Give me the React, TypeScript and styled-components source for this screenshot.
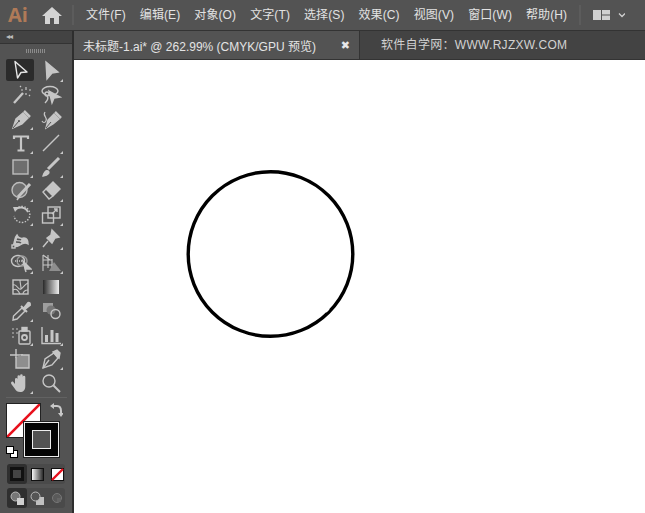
import React from "react";
import styled, { createGlobalStyle } from "styled-components";

const Global = createGlobalStyle`
  html, body { margin: 0; padding: 0; background: #535353; overflow: hidden; }
  #root { width: 645px; height: 513px; }
`;
const FONT = `"Liberation Sans", "Noto Sans CJK SC", sans-serif`;
const Page = styled.div`
  width: 645px; height: 513px; display: flex; flex-direction: column; background: #535353;
  font-family: ${FONT}; overflow: hidden;
`;
const MenuBar = styled.header`
  height: 30px; flex: none; display: flex; align-items: center; background: #535353;
  border-bottom: 1px solid #333; box-sizing: content-box;
`;
const Logo = styled.div`
  width: 35px; padding-left: 8px; box-sizing: border-box; font: bold 20px/30px "Open Sans", sans-serif;
  color: #b07a58; letter-spacing: 0; flex: none;
`;
const HomeBox = styled.div` width: 31px; flex: none; display: flex; justify-content: center; margin-left: 1px; `;
const Divider = styled.div` width: 2px; height: 20px; background: #5c5c5c; margin: 0 12px 0 5px; flex: none; `;
const MenuItem = styled.span`
  color: #e2e2e2; font-size: 12px; line-height: 30px; margin-right: ${(p: { $gap: number }) => p.$gap}px; white-space: nowrap;
  letter-spacing: 0.1px;
`;
const Workspace = styled.div` margin-left: 0; display: flex; align-items: center; `;
const Body = styled.div` flex: 1; display: flex; min-height: 0; `;
const ToolPanel = styled.aside`
  width: 72px; flex: none; background: #535353; border-right: 2px solid #2e2e2e; display: flex; flex-direction: column;
`;
const PanelHead = styled.div`
  height: 12px; background: #434343; color: #bbb; font-size: 8px; line-height: 12px; padding-left: 6px;
  border-bottom: 1px solid #333; letter-spacing: -1px;
`;
const Grip = styled.div`
  width: 20px; height: 4px; margin: 5px 0 0 26px; flex: none;
  background: repeating-linear-gradient(90deg, #8b8b8b 0 1px, #535353 1px 2px);
`;
const ToolGrid = styled.div`
  display: grid; grid-template-columns: 30px 30px; grid-auto-rows: 24px; padding: 6px 0 0 6px;
`;
const ToolCell = styled.div<{ $active?: boolean; $corner?: boolean }>`
  position: relative; display: flex; align-items: center; justify-content: center; border-radius: 2px;
  background: ${(p) => (p.$active ? "#2b2b2b" : "transparent")};
  ${(p) => p.$active && "width: 28px; height: 22px;"}
  &::after {
    content: ""; display: ${(p) => (p.$corner ? "block" : "none")}; position: absolute; right: 3px; bottom: 1px;
    border-style: solid; border-width: 0 0 3px 3px; border-color: transparent transparent #c8c8c8 transparent;
  }
`;
const ToolSep = styled.div` height: 1px; background: #626262; margin: 2px 5px 0 6px; `;
const ColorArea = styled.div` position: relative; height: 62px; margin-top: 3px; `;
const FillSwatch = styled.div`
  position: absolute; left: 6px; top: 2px; width: 35px; height: 35px; background: #fff; border: 1px solid #222; box-sizing: border-box;
  overflow: hidden;
`;
const StrokeSwatch = styled.div`
  position: absolute; left: 24px; top: 21px; width: 35px; height: 35px; background: #050505; border: 1px solid #eee; outline: 1px solid #222;
  box-sizing: border-box; display: flex; align-items: center; justify-content: center;
`;
const StrokeHole = styled.div` width: 17px; height: 17px; background: #535353; border: 1px solid #eee; `;
const SwapIcon = styled.div` position: absolute; left: 50px; top: 2px; `;
const DefaultIcon = styled.div` position: absolute; left: 6px; top: 43px; `;
const ModeRow = styled.div`
  display: flex; margin: 1px 0 0 7px; width: 58px; height: 20px; border-radius: 3px; background: #4a4a4a; padding: 0; align-items: center;
`;
const ModeCell = styled.div<{ $active?: boolean }>`
  width: 20px; height: 20px; flex: none; display: flex; align-items: center; justify-content: center; border-radius: 3px;
  background: ${(p) => (p.$active ? "#2f2f2f" : "transparent")};
`;
const DrawRow = styled(ModeRow)` margin-top: 4px; `;
const Main = styled.main` flex: 1; display: flex; flex-direction: column; min-width: 0; `;
const TabBar = styled.div` height: 28px; flex: none; display: flex; background: #434343; border-bottom: 1px solid #333; `;
const ActiveTab = styled.div`
  width: 286px; flex: none; background: #535353; border-right: 1px solid #333; display: flex; align-items: center; justify-content: space-between;
  padding: 0 9px; box-sizing: border-box; color: #e4e4e4; font-size: 12px; white-space: nowrap;
`;
const TabClose = styled.span` font: bold 11px "DejaVu Sans", sans-serif; color: #e8e8e8; `;
const OtherTab = styled.div` padding-left: 21px; color: #d2d2d2; font-size: 12px; line-height: 28px; white-space: nowrap; letter-spacing: 0.3px; `;
const Canvas = styled.div` flex: 1; background: #fff; position: relative; `;
const Drawing = styled.svg` position: absolute; left: 109px; top: 108px; `;

const C = "#c6c6c6";
const Ic = ({ children, w = 22, h = 22 }: { children: React.ReactNode; w?: number; h?: number }) => (
  <svg width={w} height={h} viewBox="0 0 22 22" fill="none" stroke={C} strokeWidth="1.4">{children}</svg>
);

const tools: { icon: React.ReactNode; corner?: boolean; active?: boolean }[] = [
  { active: true, icon: <Ic><path d="M6 2.5 L18 13 L12 13.5 L8.5 19 Z" stroke="#e6e6e6" strokeLinejoin="round" /></Ic> },
  { corner: true, icon: <Ic><path d="M6 2 L18 12 L12 13 L7 19 Z" fill={C} stroke={C} /></Ic> },
  { icon: <Ic><path d="M4 19 L13 9" strokeWidth="2.4" /><path d="M16 3v3M16 9v2M11 6h2M19 6h2M10 2l1 1M19 11l1 1" strokeWidth="1.2" /></Ic> },
  { icon: <Ic><ellipse cx="10" cy="7" rx="8" ry="4.5" /><path d="M9 7 L20 13 L14 14 L12 19 Z" fill={C} /><circle cx="7" cy="10" r="2" /><path d="M7 12c2 2 0 5-2 7" /></Ic> },
  { corner: true, icon: <Ic><path d="M3 20 L6 11 L13 5 L18 10 L12 16 Z" fill={C} stroke={C} /><path d="M14 3 L20 9" strokeWidth="2.5" /><path d="M3 20 L9 13" stroke="#535353" strokeWidth="1" /><circle cx="9" cy="13" r="1" fill="#535353" stroke="none" /></Ic> },
  { icon: <Ic><path d="M6 20 L8 12 L14 6 L19 11 L13 16 Z" fill={C} stroke={C} /><path d="M15 4 L21 10" strokeWidth="2.5" /><path d="M6 20 L11 14" stroke="#535353" strokeWidth="1" /><path d="M5 4c-3 4 3 5 1 9-1 2-3 2-4 0" strokeWidth="1.2" /></Ic> },
  { corner: true, icon: <svg width="22" height="22" viewBox="0 0 22 22" fill="none" stroke={C} strokeWidth="2.2"><path d="M4 7V4.5H18V7M11 4.5V18.5M7.5 18.5H14.5" /></svg> },
  { corner: true, icon: <Ic><path d="M3 19 L19 3" /></Ic> },
  { corner: true, icon: <Ic><rect x="3" y="4" width="15" height="14" fill="#6e6e6e" stroke="#bdbdbd" /></Ic> },
  { corner: true, icon: <Ic><path d="M3 20c1-4 3-6 5-5s1 4-5 5Z" fill={C} /><path d="M8 13 L19 2" strokeWidth="3" /></Ic> },
  { corner: true, icon: <Ic><circle cx="9.5" cy="10" r="7.5" fill="#6e6e6e" stroke="#bdbdbd" /><path d="M8 17 L20 4" strokeWidth="3" /><path d="M7 20 L9 17" strokeWidth="1.5" /></Ic> },
  { corner: true, icon: <Ic><path d="M13 2 L20 9 L13 16 L6 9 Z" fill={C} /><path d="M6 9 L3 12 L9 19 L13 16" /></Ic> },
  { corner: true, icon: <Ic><path d="M6 5a8 8 0 1 1-2 7" strokeDasharray="1.5 1.5" /><path d="M5 6a8 8 0 0 1 13 2" strokeWidth="1.8" /><path d="M3 3 L9 3 L5 8 Z" fill={C} stroke="none" /></Ic> },
  { corner: true, icon: <Ic><rect x="2.5" y="9" width="11" height="10" /><rect x="8" y="3" width="12" height="11" /><path d="M12 10 L17 5M14 5h3v3" /></Ic> },
  { corner: true, icon: <Ic><path d="M3 18c2-4 1-8 4-11 1 3 4 4 7 3 3 0 4 3 4 6-3-2-5-1-8 1-2 1-5 2-7 1Z" fill={C} stroke={C} /><path d="M7 11c2 1 3 0 4 1M6 14c2 0 4 0 5 1" stroke="#535353" /><rect x="2" y="17" width="3" height="3" fill="#535353" /></Ic> },
  { corner: true, icon: <Ic><path d="M12 2 L19 9 L15 10 L12 15 L7 10 L11 7 Z" fill={C} stroke={C} /><path d="M8 13 L3 19" /></Ic> },
  { corner: true, icon: <Ic><ellipse cx="8" cy="9" rx="6.5" ry="5.5" /><ellipse cx="12" cy="9" rx="5" ry="5" stroke="#9a9a9a" /><path d="M5 9h7" strokeDasharray="1 1" /><path d="M13 9 L21 17 L15 17 L16 20 Z" fill={C} stroke={C} /></Ic> },
  { corner: true, icon: <Ic><path d="M3 3V19M3 3L10 8 M3 8h9 M3 13h11 M8 3v13 M12 7v9" strokeWidth="1.1" /><path d="M9 19 L14 10 L21 19 Z" fill="#8e8e8e" stroke="none" /></Ic> },
  { icon: <Ic><rect x="3" y="4" width="15" height="14" /><path d="M3 9c4-2 5 6 8 4s3-4 7-6M3 14c3-2 5 0 7 4M10 4c0 3 1 5 1 9M13 18c0-2 2-4 5-4" strokeWidth="1.1" /></Ic> },
  { icon: <svg width="16" height="14"><defs><linearGradient id="tg"><stop offset="0" stopColor="#2a2a2a" /><stop offset="1" stopColor="#efefef" /></linearGradient></defs><rect width="16" height="14" fill="url(#tg)" /></svg> },
  { corner: true, icon: <Ic><path d="M3 20 L3.5 16 L12 8 L15 11 L7 19 Z" /><path d="M11 6 L17 12M14 8 L18 3 Q20 2 20 5 L15 9" fill={C} strokeWidth="2" /></Ic> },
  { icon: <Ic><rect x="3" y="3" width="10" height="9" fill="#9e9e9e" stroke="none" /><circle cx="11" cy="10" r="4.5" fill="#777" stroke="none" /><circle cx="15.5" cy="14" r="4.5" stroke={C} /></Ic> },
  { corner: true, icon: <Ic><rect x="9" y="7" width="11" height="13" rx="1" /><rect x="12" y="3.5" width="5" height="3.5" fill={C} /><circle cx="14.5" cy="13.5" r="2.5" strokeWidth="1.8" /><path d="M2 5h2M6 5h2M2 9h2M6 9h2M2 13h2" stroke="#8a8a8a" strokeWidth="2" /></Ic> },
  { corner: true, icon: <Ic><path d="M2 3V19.5H21" /><path d="M6.5 18V11M12 18V6M17 18V9" strokeWidth="3" /></Ic> },
  { icon: <Ic><path d="M0 7H13M6 1V10" /><path d="M6 9V20H19V7H11" fill="#8e8e8e" stroke={C} /></Ic> },
  { corner: true, icon: <Ic><path d="M3 20 L5 11 L14 5 L18 10 L12 17 Z" /><path d="M13 4 L19 10 L20 5 L17 2 Z" fill={C} /><path d="M3 20 L9 12" /></Ic> },
  { corner: true, icon: <svg width="22" height="22" viewBox="0 0 22 22"><path d="M5 12V7a1.3 1.3 0 0 1 2.5 0v3V4.5a1.3 1.3 0 0 1 2.6 0V10V3.5a1.3 1.3 0 0 1 2.6 0V10V5a1.3 1.3 0 0 1 2.6 0v9c0 4-2 6-5 6s-4-1-6-4l-3-4c-1-2 1-3 2-2Z" fill={C} /></svg> },
  { icon: <Ic><circle cx="9" cy="9" r="6" /><path d="M13.5 13.5 L20 20" strokeWidth="2" /></Ic> },
];

const menus: [string, number][] = [
  ["文件(F)", 14], ["编辑(E)", 14], ["对象(O)", 14], ["文字(T)", 14], ["选择(S)", 14],
  ["效果(C)", 14], ["视图(V)", 14], ["窗口(W)", 14], ["帮助(H)", 12],
];

export default function App() {
  return (
    <Page>
      <Global />
      <MenuBar>
        <Logo>Ai</Logo>
        <HomeBox>
          <svg width="20" height="17" viewBox="0 0 20 17" fill="#d4d4d4"><path d="M10 0 L20 9 L17 9 L17 17 L12 17 L12 11 L8 11 L8 17 L3 17 L3 9 L0 9 Z" /></svg>
        </HomeBox>
        <Divider />
        {menus.map(([m, g]) => <MenuItem key={m} $gap={g}>{m}</MenuItem>)}
        <Divider style={{ margin: "0 12px 0 0" }} />
        <Workspace>
          <svg width="32" height="12" viewBox="0 0 32 12">
            <rect x="0" y="1" width="8" height="10" fill="#d0d0d0" /><rect x="9" y="1" width="8" height="4.5" fill="#d0d0d0" /><rect x="9" y="6.5" width="8" height="4.5" fill="#d0d0d0" />
            <path d="M26 4.5 L29 7.5 L32 4.5" fill="none" stroke="#d0d0d0" strokeWidth="1.3" />
          </svg>
        </Workspace>
      </MenuBar>
      <Body>
        <ToolPanel>
          <PanelHead>◂◂</PanelHead>
          <Grip />
          <ToolGrid>
            {tools.map((t, i) => (
              <ToolCell key={i} $active={t.active} $corner={t.corner}>{t.icon}</ToolCell>
            ))}
          </ToolGrid>
          <ToolSep />
          <ColorArea>
            <FillSwatch>
              <svg width="33" height="33"><path d="M0 33 L33 0" stroke="#e8101c" strokeWidth="2.6" /></svg>
            </FillSwatch>
            <StrokeSwatch><StrokeHole /></StrokeSwatch>
            <SwapIcon>
              <svg width="13" height="14" viewBox="0 0 13 14" fill="none" stroke="#c8c8c8" strokeWidth="2"><path d="M2 3h5c3 0 4 2 4 5v3" /><path d="M0 3 L4 0V6Z M8 10h6l-3 4Z" fill="#c8c8c8" stroke="none" /></svg>
            </SwapIcon>
            <DefaultIcon>
              <svg width="12" height="12"><rect x="4.5" y="4.5" width="7" height="7" fill="#fff" stroke="#000" /><rect x="0.5" y="0.5" width="7" height="7" fill="#fff" stroke="#000" /></svg>
            </DefaultIcon>
          </ColorArea>
          <ModeRow>
            <ModeCell $active><svg width="14" height="14"><rect width="14" height="14" fill="#111" /><rect x="3" y="3" width="8" height="8" fill="#444" /></svg></ModeCell>
            <ModeCell><svg width="13" height="13"><defs><linearGradient id="mg"><stop offset="0" stopColor="#fff" /><stop offset="1" stopColor="#222" /></linearGradient></defs><rect x=".5" y=".5" width="12" height="12" fill="url(#mg)" stroke="#111" /></svg></ModeCell>
            <ModeCell><svg width="13" height="13"><rect x=".5" y=".5" width="12" height="12" fill="#fff" stroke="#111" /><path d="M1 12 L12 1" stroke="#e8101c" strokeWidth="2.4" /></svg></ModeCell>
          </ModeRow>
          <DrawRow>
            <ModeCell $active><svg width="16" height="16"><circle cx="6.5" cy="6.5" r="4.5" fill="#777" stroke="#bbb" /><rect x="8" y="8" width="7" height="7" fill="#d0d0d0" /></svg></ModeCell>
            <ModeCell><svg width="16" height="16"><rect x="7" y="7" width="8" height="8" fill="#c0c0c0" /><circle cx="6.5" cy="6.5" r="4.5" fill="#555" stroke="#bbb" /></svg></ModeCell>
            <ModeCell><svg width="12" height="12"><circle cx="6" cy="6" r="4.5" fill="#5a5a5a" stroke="#777" /><rect x="6" y="6" width="4" height="4" fill="#666" /></svg></ModeCell>
          </DrawRow>
        </ToolPanel>
        <Main>
          <TabBar>
            <ActiveTab>
              <span>未标题-1.ai* @ 262.99% (CMYK/GPU 预览)</span>
              <TabClose>✖</TabClose>
            </ActiveTab>
            <OtherTab>软件自学网：WWW.RJZXW.COM</OtherTab>
          </TabBar>
          <Canvas>
            <Drawing width="176" height="176" viewBox="0 0 176 176">
              <circle cx="87.5" cy="86" r="82.3" fill="none" stroke="#000" strokeWidth="3.4" />
              <path d="M143 144 L146 141" stroke="#fff" strokeWidth="1.4" />
            </Drawing>
          </Canvas>
        </Main>
      </Body>
    </Page>
  );
}
